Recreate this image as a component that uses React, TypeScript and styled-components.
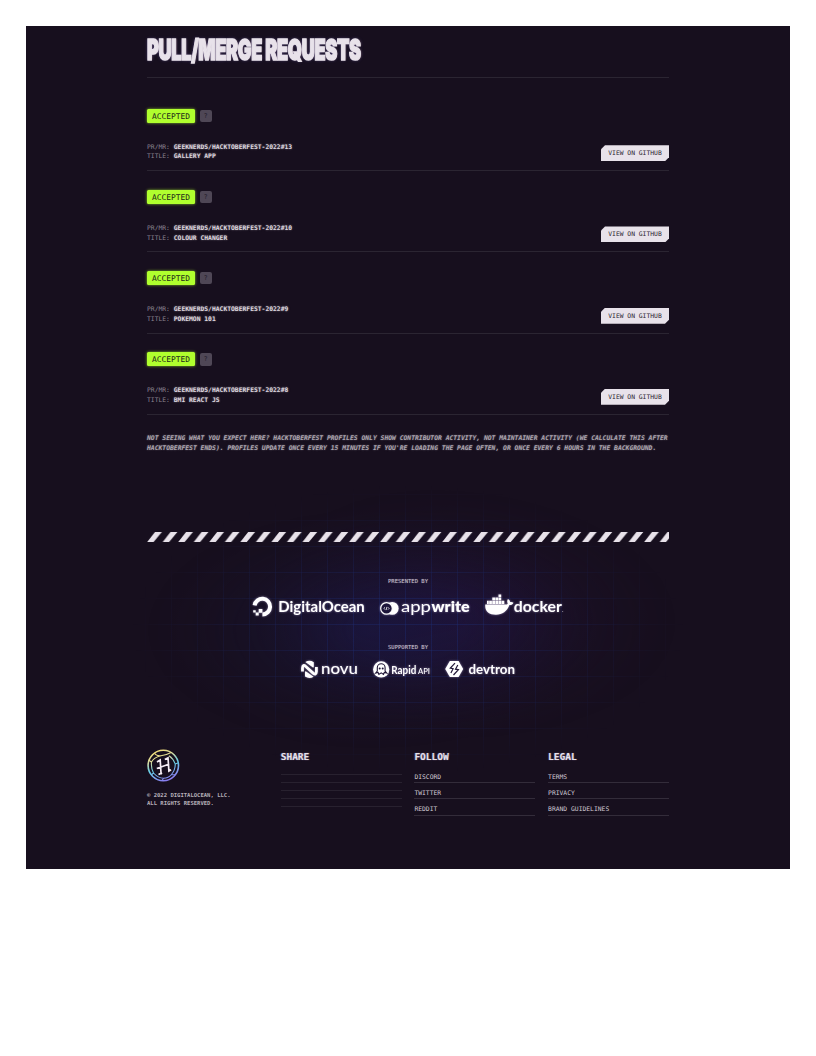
import React from 'react';
import styled, { createGlobalStyle } from 'styled-components';

const ink = '#e8e2ea';
const mono = '"DejaVu Sans Mono", "Liberation Mono", monospace';

const Global = createGlobalStyle`
  *, *::before, *::after { box-sizing: border-box; }
  body { margin: 0; background: #fff; font-family: ${mono}; color: ${ink}; }
  h1, h2, p, ul { margin: 0; padding: 0; }
  a { color: inherit; text-decoration: none; }
`;

const Page = styled.div`
  min-height: 1056px;
  padding: 26px;
`;

const Panel = styled.main`
  height: 843px;
  padding: 0 121px;
  background: #170f1e;
  overflow: hidden;
`;

const TitleBar = styled.header`
  height: 51.5px;
  padding-top: 7.5px;
  border-bottom: 1px solid #2b2532;
`;

const Title = styled.h1`
  width: max-content;
  font: 900 28.5px/31px Inter, "Liberation Sans", sans-serif;
  letter-spacing: -0.5px;
  color: ${ink};
  -webkit-text-stroke: 1.5px ${ink};
  text-shadow: 0 0 4px rgba(150, 140, 255, 0.5), 1px 0 2px rgba(255, 190, 120, 0.35);
  transform: scaleX(0.635);
  transform-origin: left;
  white-space: nowrap;
`;

const Requests = styled.section`
  padding-top: 12.5px;
`;

const Request = styled.article`
  height: 81.2px;
  padding-top: 18.8px;
  border-bottom: 1px solid #2b2532;
`;

const Status = styled.div`
  display: flex;
  align-items: center;
  gap: 4.5px;
  height: 14px;
`;

const Badge = styled.span`
  width: 48px;
  height: 14px;
  border-radius: 1.5px;
  background: #b0ff2e;
  color: #20261a;
  font-size: 7.9px;
  line-height: 15.2px;
  text-align: center;
  box-shadow: 0 0 3px rgba(176, 255, 46, 0.75);
`;

const Hint = styled.span`
  width: 12.5px;
  height: 12.5px;
  border-radius: 2px;
  background: #4f4756;
  color: #221a29;
  font-size: 6.4px;
  line-height: 12.5px;
  text-align: center;
`;

const Details = styled.div`
  display: flex;
  justify-content: space-between;
  align-items: flex-end;
  margin-top: 18.5px;
  height: 20px;
`;

const Meta = styled.p`
  align-self: flex-start;
  padding-top: 0.6px;
  font-size: 6.35px;
  line-height: 9.6px;
  color: #8b8490;
  b {
    color: #ddd6df;
    text-shadow: 0 0 2px rgba(232, 226, 234, 0.5);
  }
`;

const ViewLink = styled.a`
  width: 68px;
  height: 16px;
  background: ${ink};
  color: #2a2230;
  font-size: 6.35px;
  line-height: 16.3px;
  text-align: center;
  clip-path: polygon(4px 0, 100% 0, 100% 12px, 64px 100%, 0 100%, 0 4px);
`;

const Note = styled.p`
  height: 117px;
  padding-top: 18.3px;
  font-size: 6.36px;
  font-style: italic;
  font-weight: 700;
  line-height: 9.6px;
  white-space: nowrap;
  color: #aca5af;
  text-shadow: 0 0 2px rgba(232, 226, 234, 0.35);
`;

const Stripes = styled.svg`
  display: block;
  width: 522px;
  height: 10px;
  position: relative;
  z-index: 1;
`;

const Sponsors = styled.section`
  position: relative;
  display: flex;
  flex-direction: column;
  align-items: center;
  height: 207px;
  padding-top: 34.5px;
  &::before {
    content: '';
    position: absolute;
    inset: -72px -60px -22px;
    background:
      repeating-linear-gradient(90deg, rgba(30, 48, 125, 0.34) 0 1px, transparent 1px 26px) 6px 0,
      repeating-linear-gradient(180deg, rgba(30, 48, 125, 0.34) 0 1px, transparent 1px 26px) 0 24px,
      radial-gradient(ellipse 230px 120px at 44% 53%, rgba(26, 24, 68, 0.68), transparent),
      radial-gradient(ellipse 220px 130px at 60% 46%, rgba(38, 18, 62, 0.66), transparent);
    mask-image: radial-gradient(ellipse 43% 48% at 50% 53%, #000 20%, rgba(0, 0, 0, 0.5) 62%, transparent);
  }
`;

const Caption = styled.h2`
  position: relative;
  font-size: 5.55px;
  font-weight: 400;
  line-height: 10px;
  color: #c4bdca;
  text-shadow: 0 0 1px rgba(196, 189, 202, 0.5);
`;

const Logos = styled.div<{ $gap: number; $top: number; $after: number }>`
  position: relative;
  display: flex;
  gap: ${(p) => p.$gap}px;
  margin: ${(p) => p.$top}px 0 ${(p) => p.$after}px;
  svg {
    display: block;
    overflow: visible;
    filter: drop-shadow(0 0 1px rgba(225, 210, 255, 0.5));
  }
`;

const Footer = styled.footer`
  display: grid;
  grid-template-columns: repeat(4, 1fr);
  gap: 12.8px;
`;

const Legal = styled.p`
  margin-top: 9px;
  font-size: 5.55px;
  font-weight: 700;
  line-height: 8px;
  color: #b5aeb8;
`;

const FootHeading = styled.h2`
  height: 15px;
  font-size: 9.5px;
  font-weight: 700;
  line-height: 15px;
  color: ${ink};
  text-shadow: -0.6px 0 1px rgba(100, 130, 255, 0.6), 0.6px 0 1px rgba(255, 160, 110, 0.5);
`;

const Links = styled.ul<{ $empty?: boolean }>`
  list-style: none;
  padding-top: ${(p) => (p.$empty ? 3.3 : 2.9)}px;
  li {
    height: ${(p) => (p.$empty ? 8 : 16.35)}px;
    padding-top: ${(p) => (p.$empty ? 0 : 5)}px;
    border-bottom: 1px solid ${(p) => (p.$empty ? '#28212f' : '#332c3a')};
    font-size: 6.35px;
    line-height: 10px;
    color: #d0c9d3;
  }
`;

const Mark = styled.svg`
  display: block;
  width: 33px;
  height: 33px;
  margin-top: 0.5px;
`;

type WordProps = { x: number; y: number; w: number; size: number; weight?: number; font?: string; children: string };

const Word = ({ x, y, w, size, weight = 700, font = 'Lato', children }: WordProps) => (
  <text
    x={x}
    y={y}
    textLength={w}
    lengthAdjust="spacingAndGlyphs"
    fontFamily={`${font}, "Liberation Sans", sans-serif`}
    fontSize={size}
    fontWeight={weight}
    fill="#fff"
  >
    {children}
  </text>
);

const DigitalOcean = () => (
  <svg width="113" height="24" viewBox="0 0 113 24">
    <path d="M10.4 20.4a7.8 7.8 0 1 0-7.8-9" fill="none" stroke="#fff" strokeWidth="4" />
    <path d="M6.7 15h3.7v3.7H6.7zM3.7 18.6h3v2.8h-3zM1.2 16.2h2.5v2.4H1.2z" fill="#fff" />
    <Word x={26.3} y={18.4} w={86.5} size={14.4} weight={700}>DigitalOcean</Word>
  </svg>
);

const Appwrite = () => (
  <svg width="90" height="24" viewBox="0 0 90 24">
    <circle cx="12.2" cy="14.4" r="6.4" fill="#fff" />
    <circle cx="6.5" cy="14.4" r="5.8" fill="#1d153a" stroke="#fff" strokeWidth="1.2" />
    <path d="M5 13.3 3.9 14.4 5 15.600M8 13.300l1.100 1.100L8 15.600M6.900 12.900l-.8 3.200" fill="none" stroke="#fff" strokeWidth=".8" />
    <Word x={21} y={18} w={30} size={15.4} weight={400}>app</Word>
    <Word x={51.5} y={18} w={38.2} size={14.2} weight={800}>write</Word>
  </svg>
);

const Docker = () => (
  <svg width="79" height="24" viewBox="0 0 79 24">
    <path
      d="M.3 10.6h20.1c1.4 0 2-.4 2.4-1.2-.9-1.5-.7-3.1.2-4.3 1.400.8 2 1.8 2.100 3 1.200-.3 2.500 0 3.400.6-.7 1.600-2.100 2.400-4.100 2.300C22 17.300 17.500 20.700 10.900 20.700 3.800 20.700-.4 17.300.3 10.600z"
      fill="#fff"
    />
    <path d="M13.5.4h2.7v2.7h-2.7zM7.3 3.6H10v2.7H7.3zM10.4 3.6h2.7v2.7h-2.7zM13.5 3.6h2.7v2.7h-2.7zM4.2 6.8h2.7v3.2H4.2zM7.3 6.8H10v3.2H7.3zM10.4 6.8h2.7v3.2h-2.7zM13.5 6.8h2.7v3.2h-2.7zM16.6 6.8h2.7v3.2h-2.7zM2 6.8h1.8v3.2H2z" fill="#fff" />
    <Word x={28.8} y={17.9} w={48} size={15} weight={700}>docker</Word>
    <circle cx="77.8" cy="17.5" r=".4" fill="#fff" />
  </svg>
);

const Novu = () => (
  <svg width="57" height="18" viewBox="0 0 57 18">
    <g fill="#fff">
      <path d="M4.3 2A8.3 8.3 0 0 1 12.8 2.2V6.500q0 1.900-1.500.5z" />
      <path d="M12.6 16.8A8.3 8.3 0 0 1 4 16.6V12.300q0-1.900 1.500-.5z" />
    </g>
    <path d="M1.5 11.5V8q.3-4.300 3.300-1.500l7.300 6.600q3 2.600 3.300-1.500V7" fill="none" stroke="#fff" strokeWidth="2.8" />
    <Word x={20} y={13.6} w={37} size={15.5} weight={500}>novu</Word>
  </svg>
);

const RapidApi = () => (
  <svg width="57" height="18" viewBox="0 0 57 18">
    <circle cx="8.2" cy="9.4" r="8.1" fill="#fff" />
    <path d="M4.3 11V7.700a3.900 3.900 0 0 1 7.800 0V11l1.700 2.100-2.500-.6-.8 1.900-2.300-1.500-2.300 1.500-.8-1.900-2.500.6z" fill="none" stroke="#211737" strokeWidth="1.1" />
    <circle cx="6.7" cy="8.5" r="1" fill="#211737" />
    <circle cx="9.7" cy="8.5" r="1" fill="#211737" />
    <Word x={18.3} y={13.7} w={25} size={11.8} weight={700}>Rapid</Word>
    <Word x={45} y={13.7} w={12} size={7.8} weight={500}>API</Word>
  </svg>
);

const Devtron = () => (
  <svg width="70" height="18" viewBox="0 0 70 18">
    <path d="M4.8.9h8.8l4.600 8.100-4.600 8.100H4.800L.2 9z" fill="#fff" />
    <path d="M10 3.2 5.300 8.200l2.800.5-2.200 4.300M12.800 5l-2.300 4.200 2.900.4L8.500 15" fill="none" stroke="#211737" strokeWidth="1.2" />
    <Word x={23.5} y={13.6} w={46.5} size={13} weight={700}>devtron</Word>
  </svg>
);

const Emblem = () => (
  <Mark viewBox="0 0 33 33">
    <defs>
      <linearGradient id="ring" x1="0.2" y1="0" x2="0.6" y2="1">
        <stop offset="0" stopColor="#f7dc72" />
        <stop offset=".28" stopColor="#d9dca0" />
        <stop offset=".55" stopColor="#66cfe8" />
        <stop offset="1" stopColor="#8a7bf0" />
      </linearGradient>
    </defs>
    <g fill="none" stroke="url(#ring)" strokeWidth="1.1">
      <circle cx="16.3" cy="16.5" r="15.2" strokeWidth="1.6" />
      <path d="M7.5 4.2q2 3 6.500 2.500 5-.5 10.200-3.200M14 6.700q-8 2-9.500 6.500L1.800 11M4.500 13.200q-.6 6 2 10.800l-2.200 2M6.500 24q4.500 5 10 5.200l-1.500 2.500M16.500 29.200q5 0 8-3.700l4 .5M24.500 25.500q4-5 3.700-10.500l3.200-1.200M28.200 15q-2-5.500-6.200-8.300" />
    </g>
    <path
      d="m10 13 3.200-2 .9 14.500M17.800 10.500l3.200-1.700.9 13.200 2.200-1.200M9.800 19.500l12.500-4.500M11.500 25.500l3.600-1.600"
      fill="none"
      stroke="#f5edf5"
      strokeWidth="1.7"
    />
  </Mark>
);

const requests = [
  { id: '13', title: 'GALLERY APP' },
  { id: '10', title: 'COLOUR CHANGER' },
  { id: '9', title: 'POKEMON 101' },
  { id: '8', title: 'BMI REACT JS' },
];

const columns = [
  { name: 'FOLLOW', links: ['DISCORD', 'TWITTER', 'REDDIT'] },
  { name: 'LEGAL', links: ['TERMS', 'PRIVACY', 'BRAND GUIDELINES'] },
];

export default function App() {
  return (
    <Page>
      <Global />
      <Panel>
        <TitleBar>
          <Title>PULL/MERGE REQUESTS</Title>
        </TitleBar>
        <Requests>
          {requests.map((r) => (
            <Request key={r.id}>
              <Status>
                <Badge>ACCEPTED</Badge>
                <Hint>?</Hint>
              </Status>
              <Details>
                <Meta>
                  PR/MR: <b>GEEKNERDS/HACKTOBERFEST-2022#{r.id}</b>
                  <br />
                  TITLE: <b>{r.title}</b>
                </Meta>
                <ViewLink href="#">VIEW ON GITHUB</ViewLink>
              </Details>
            </Request>
          ))}
        </Requests>
        <Note>
          NOT SEEING WHAT YOU EXPECT HERE? HACKTOBERFEST PROFILES ONLY SHOW CONTRIBUTOR ACTIVITY, NOT MAINTAINER ACTIVITY (WE CALCULATE THIS AFTER
          <br />
          HACKTOBERFEST ENDS). PROFILES UPDATE ONCE EVERY 15 MINUTES IF YOU'RE LOADING THE PAGE OFTEN, OR ONCE EVERY 6 HOURS IN THE BACKGROUND.
        </Note>
        <Stripes viewBox="0 0 522 10">
          <defs>
            <pattern id="hazard" width="15.53" height="10" patternUnits="userSpaceOnUse">
              <path d="M.2 10 8 0h6.9L6.600 10z" fill={ink} />
            </pattern>
          </defs>
          <rect width="522" height="10" fill="url(#hazard)" />
        </Stripes>
        <Sponsors>
          <Caption>PRESENTED BY</Caption>
          <Logos $gap={15} $top={7.5} $after={24}>
            <DigitalOcean />
            <Appwrite />
            <Docker />
          </Logos>
          <Caption>SUPPORTED BY</Caption>
          <Logos $gap={15} $top={8} $after={0}>
            <Novu />
            <RapidApi />
            <Devtron />
          </Logos>
        </Sponsors>
        <Footer>
          <div>
            <Emblem />
            <Legal>
              © 2022 DIGITALOCEAN, LLC.
              <br />
              ALL RIGHTS RESERVED.
            </Legal>
          </div>
          <div>
            <FootHeading>SHARE</FootHeading>
            <Links $empty>
              {[0, 1, 2, 3, 4].map((i) => (
                <li key={i} />
              ))}
            </Links>
          </div>
          {columns.map((c) => (
            <div key={c.name}>
              <FootHeading>{c.name}</FootHeading>
              <Links>
                {c.links.map((l) => (
                  <li key={l}>
                    <a href="#">{l}</a>
                  </li>
                ))}
              </Links>
            </div>
          ))}
        </Footer>
      </Panel>
    </Page>
  );
}
